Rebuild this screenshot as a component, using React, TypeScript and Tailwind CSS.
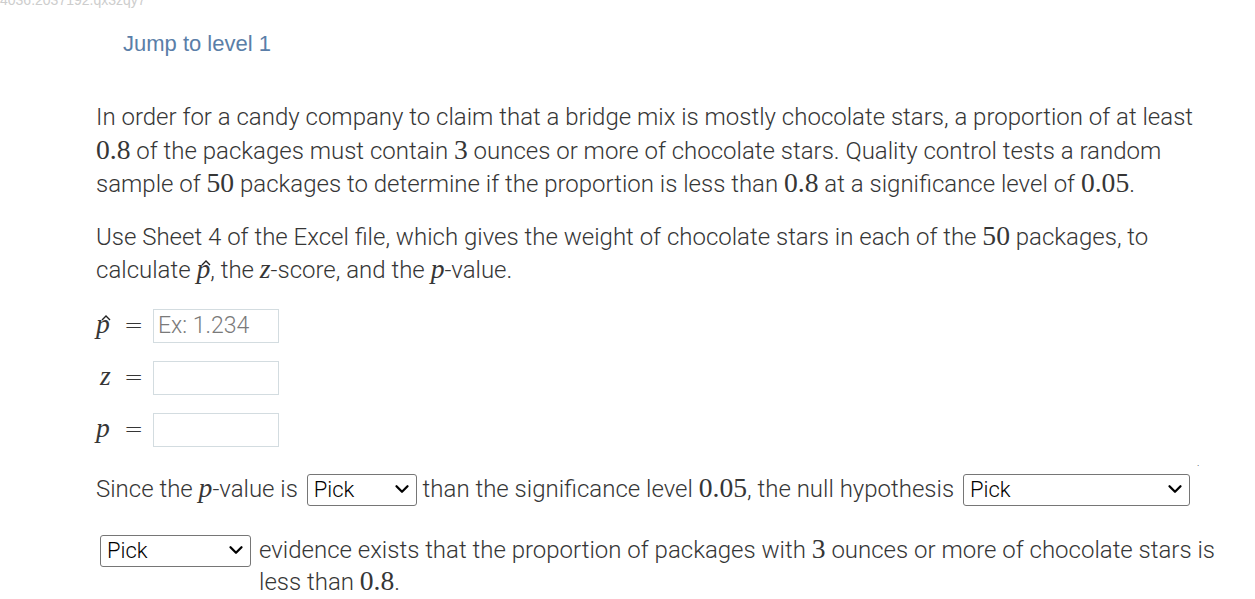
import { ChevronDown } from 'lucide-react'

const math = "font-['Liberation_Serif',serif] text-[1.15em] leading-none"

function M({ children, italic }: { children: React.ReactNode; italic?: boolean }) {
  return <span className={`${math} ${italic ? 'italic' : ''}`}>{children}</span>
}

function PHat() {
  return (
    <span className="relative inline-block">
      <M italic>p</M>
      <svg className="absolute left-[5px] top-[6px]" width="10" height="6" viewBox="0 0 10 6">
        <path d="M1 5 L5 1 L9 5" fill="none" stroke="#222" strokeWidth="1.4" />
      </svg>
    </span>
  )
}

function Eq() {
  return <span className="font-['DejaVu_Sans',sans-serif] text-[23px] font-light leading-none">=</span>
}

function Pick({ width, className = '' }: { width: string; className?: string }) {
  return (
    <span className={`relative inline-block align-middle ${className}`}>
      <select
        className={`${width} h-[32px] appearance-none rounded-[3px] border border-[#767676] bg-white pl-[6px] font-['Roboto',sans-serif] text-[22px] font-light text-black leading-[30px]`}
        defaultValue=""
      >
        <option value="">Pick</option>
      </select>
      {/* chevron sits on top of the select */}
      <ChevronDown
        className="pointer-events-none absolute right-[4px] top-[5px] h-[22px] w-[22px] text-black"
        strokeWidth={2.5}
      />
    </span>
  )
}

function AnswerRow({ label, placeholder }: { label: React.ReactNode; placeholder?: string }) {
  return (
    <div className="flex h-[34px] items-center">
      <div className="flex w-[57px] items-center">
        <span className="w-[28px]">{label}</span>
        <Eq />
      </div>
      <input
        className="h-[34px] w-[126px] border border-[#d3dce0] px-[4px] text-[23px] font-light text-[#333] placeholder:text-[#7a7a7a]"
        placeholder={placeholder}
      />
    </div>
  )
}

export default function App() {
  return (
    <div className="min-h-screen overflow-hidden bg-white font-['Roboto',sans-serif] text-[#363636]">
      <div className="-mt-[8px] h-[16px] font-['Liberation_Sans',sans-serif] text-[14px] leading-[16px] text-[#cdcdcd]">
        4036.2037192.qx3zqy7
      </div>

      <div className="mt-[19px] pl-[123px] font-['Liberation_Sans',sans-serif] text-[22px] leading-[33px] text-[#5a7ea8]">
        Jump to level 1
      </div>

      <div className="ml-[96px] mt-[41px] w-[1126px] text-[24px] font-light leading-[33.5px]">
        <p>
          In order for a candy company to claim that a bridge mix is mostly chocolate stars, a proportion of at least{' '}
          <M>0.8</M> of the packages must contain <M>3</M> ounces or more of chocolate stars. Quality control tests a
          random sample of <M>50</M> packages to determine if the proportion is less than <M>0.8</M> at a significance
          level of <M>0.05</M>.
        </p>

        <p className="mt-[19px]">
          Use Sheet 4 of the Excel file, which gives the weight of chocolate stars in each of the <M>50</M> packages, to
          calculate <PHat />, the <M italic>z</M>-score, and the <M italic>p</M>-value.
        </p>

        <div className="mt-[21px] flex flex-col gap-[18px]">
          <AnswerRow label={<PHat />} placeholder="Ex: 1.234" />
          <AnswerRow label={<span className="pl-[4px]"><M italic>z</M></span>} />
          <AnswerRow label={<M italic>p</M>} />
        </div>

        <div className="relative mt-[26px] whitespace-nowrap">
          Since the <M italic>p</M>-value is <Pick width="w-[110px]" className="ml-[3px]" /> than the significance
          level <M>0.05</M>, the null hypothesis <Pick width="w-[227px]" className="ml-[3px]" />
          <span className="absolute left-[1101px] top-[-27px] text-[10px]">.</span>
        </div>

        <div className="mt-[27px] flex items-start">
          <Pick width="w-[151px]" className="ml-[4px]" />
          <div className="ml-[8px] flex-1 leading-[32px]">
            evidence exists that the proportion of packages with <M>3</M> ounces or more of chocolate stars is less
            than <M>0.8</M>.
          </div>
        </div>
      </div>
    </div>
  )
}
